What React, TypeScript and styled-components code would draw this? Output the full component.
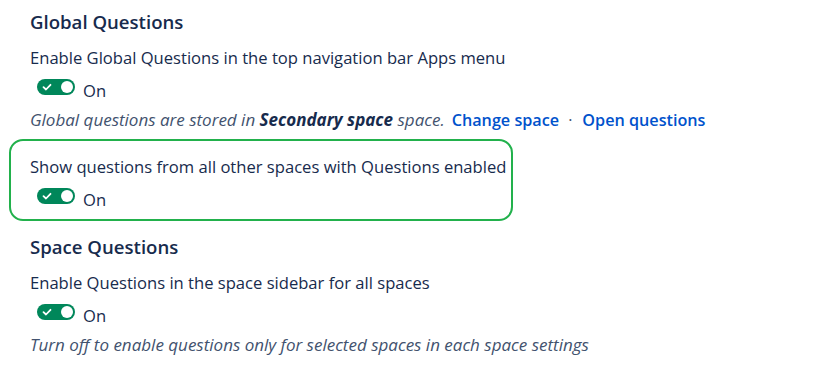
import React from 'react';
import styled, { createGlobalStyle } from 'styled-components';

const GlobalStyle = createGlobalStyle`
    body {
        margin: 0;
        background: #ffffff;
        font-family: "Open Sans", "Noto Sans", sans-serif;
        color: #172B4D;
    }
`;

const Page = styled.div`
    display: flex;
    flex-direction: column;
    padding: 10px 0 0 30px;
`;

const Heading = styled.h2`
    margin: 0 0 12px;
    font-size: 18.6px;
    font-weight: 600;
    line-height: 24px;
    color: #172B4D;
`;

const Setting = styled.div`
    display: flex;
    flex-direction: column;
`;

const Label = styled.div`
    font-size: 16.6px;
    line-height: 24px;
    color: #172B4D;
    white-space: nowrap;
`;

const ToggleRow = styled.div`
    display: flex;
    align-items: center;
    gap: 8px;
    height: 34px;
    padding-left: 7px;
`;

const Track = styled.span<{ on: boolean }>`
    position: relative;
    display: inline-flex;
    align-items: center;
    width: 38px;
    height: 16px;
    border-radius: 8px;
    background: ${p => (p.on ? '#00875A' : '#A5ADBA')};
`;

const Knob = styled.span`
    position: absolute;
    right: 2px;
    top: 2px;
    width: 12px;
    height: 12px;
    border-radius: 50%;
    background: #ffffff;
`;

const Check = styled.svg`
    margin-left: 5px;
`;

const StateText = styled.span`
    font-size: 16.6px;
    color: #172B4D;
    padding-top: 6px;
`;

const Note = styled.div`
    margin-top: 4px;
    font-size: 17px;
    font-style: italic;
    line-height: 24px;
    color: #42526E;
    white-space: nowrap;

    b {
        color: #172B4D;
        font-weight: 700;
    }
`;

const Link = styled.a<{ first?: boolean }>`
    color: #0052CC;
    font-size: 16.2px;
    font-style: normal;
    font-weight: 600;
    text-decoration: none;
    margin-left: ${p => (p.first ? '7px' : '0')};
`;

const Dot = styled.span`
    font-size: 16px;
    font-style: normal;
    color: #42526E;
    margin: 0 10px 0 9px;
`;

const Highlight = styled.div`
    align-self: flex-start;
    margin: 7px 0 14px -21px;
    padding: 14px 5px 6px 19px;
    border: 2px solid #22B14C;
    border-radius: 14px;
`;

const Toggle: React.FC<{ on?: boolean }> = ({ on = true }) => (
    <ToggleRow>
        <Track on={on}>
            <Check width="10" height="10" viewBox="0 0 10 10">
                <path d="M1.5 5.2 L4 7.5 L8.5 2.8" fill="none" stroke="#ffffff" strokeWidth="1.8" strokeLinecap="round" strokeLinejoin="round" />
            </Check>
            <Knob />
        </Track>
        <StateText>{on ? 'On' : 'Off'}</StateText>
    </ToggleRow>
);

const App: React.FC = () => {
    return (
        <>
            <GlobalStyle />
            <Page>
                <Heading>Global Questions</Heading>
                <Setting>
                    <Label>Enable Global Questions in the top navigation bar Apps menu</Label>
                    <Toggle />
                    <Note>
                        Global questions are stored in <b>Secondary space</b> space.
                        <Link href="#" first>Change space</Link>
                        <Dot>·</Dot>
                        <Link href="#">Open questions</Link>
                    </Note>
                </Setting>
                <Highlight>
                    <Label>Show questions from all other spaces with Questions enabled</Label>
                    <Toggle />
                </Highlight>
                <Heading>Space Questions</Heading>
                <Setting>
                    <Label>Enable Questions in the space sidebar for all spaces</Label>
                    <Toggle />
                    <Note>Turn off to enable questions only for selected spaces in each space settings</Note>
                </Setting>
            </Page>
        </>
    );
};

export default App;
